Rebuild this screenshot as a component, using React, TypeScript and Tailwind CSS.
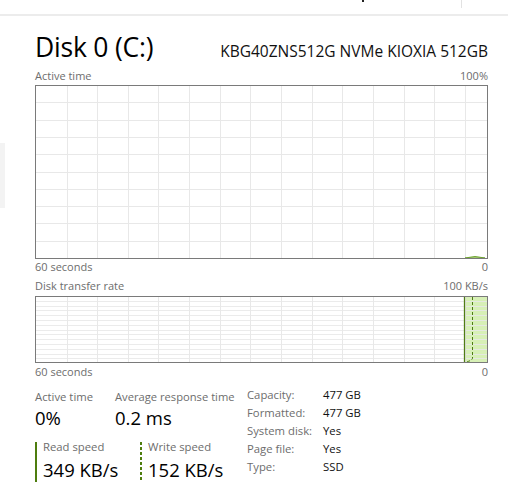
import React from 'react';

const GREEN = '#4f7d14';
const FILL = '#d7f0b6';
const GRID = '#e8e8e8';
const BORDER = '#7a7a7a';

const vLines = Array.from({ length: 14 }, (_, i) => Math.round(31.5 + 30.65 * i) + 0.5);

function ActiveChart() {
    const rows = Array.from({ length: 9 }, (_, k) => Math.round(17.3 * (k + 1)) + 0.5);
    return (
        <svg width={453} height={174} className="block">
            <rect x={0} y={0} width={453} height={174} fill="#ffffff" />
            {rows.map((y) => (
                <line key={y} x1={1} x2={452} y1={y} y2={y} stroke={GRID} />
            ))}
            {vLines.map((x) => (
                <line key={x} x1={x} x2={x} y1={1} y2={173} stroke={GRID} />
            ))}
            <path d="M430 173 Q 440 170 450 173 Z" fill={FILL} stroke="#6fa332" strokeWidth={1} />
            <rect x={0.5} y={0.5} width={452} height={173} fill="none" stroke={BORDER} />
        </svg>
    );
}

function TransferChart() {
    const rows = Array.from({ length: 13 }, (_, k) => Math.round(4.8 * (k + 1)) + 0.5);
    return (
        <svg width={453} height={67} className="block">
            <rect x={0} y={0} width={453} height={67} fill="#ffffff" />
            <rect x={429} y={1} width={23} height={65} fill={FILL} />
            {rows.map((y) => (
                <line key={y} x1={1} x2={452} y1={y} y2={y} stroke={GRID} strokeOpacity={0.85} />
            ))}
            {vLines.map((x) => (
                <line key={x} x1={x} x2={x} y1={1} y2={66} stroke={GRID} />
            ))}
            <line x1={429.5} x2={429.5} y1={1} y2={66} stroke={GREEN} strokeWidth={1.3} />
            <path d="M437.5 1 V 62 Q 437.5 64.5 431 66" fill="none" stroke={GREEN} strokeWidth={1} strokeDasharray="3 2" />
            <rect x={0.5} y={0.5} width={452} height={66} fill="none" stroke={BORDER} />
        </svg>
    );
}

function ChartLabels({ left, right }: { left: string; right: string }) {
    return (
        <div className="flex justify-between h-[14px] leading-[14px] text-[11px] text-[#6d6d6d]">
            <span>{left}</span>
            <span>{right}</span>
        </div>
    );
}

const info = [
    ['Capacity:', '477 GB'],
    ['Formatted:', '477 GB'],
    ['System disk:', 'Yes'],
    ['Page file:', 'Yes'],
    ['Type:', 'SSD'],
];

export default function App() {
    return (
        <div className="w-[508px] h-[494px] bg-white overflow-hidden font-['Open_Sans',sans-serif] text-black">
            {/* clipped header strip */}
            <div className="flex items-start h-[16px] border-b-2 border-[#ececec]">
                <div className="ml-[362px] w-[2px] h-[2px] bg-[#222]" />
                <div className="ml-[97px] w-px h-[8px] bg-[#e2e2e2]" />
            </div>

            <div className="flex">
                <div className="w-[35px] shrink-0">
                    <div className="mt-[127px] w-[5px] h-[65px] bg-[#f3f3f3]" />
                </div>

                <div className="w-[453px] flex flex-col">
                    <div className="mt-[14px] flex justify-between items-baseline h-[34px] leading-[34px]">
                        <span className="text-[26.5px] tracking-[-0.2px]">Disk 0 (C:)</span>
                        <span className="text-[15.5px] text-[#111]">KBG40ZNS512G NVMe KIOXIA 512GB</span>
                    </div>

                    <div className="mt-[5px]">
                        <ChartLabels left="Active time" right="100%" />
                    </div>
                    <div className="mt-[2px]">
                        <ActiveChart />
                    </div>
                    <div className="mt-px">
                        <ChartLabels left="60 seconds" right="0" />
                    </div>

                    <div className="mt-[5px]">
                        <ChartLabels left="Disk transfer rate" right="100 KB/s" />
                    </div>
                    <div className="mt-[3px]">
                        <TransferChart />
                    </div>
                    <div className="mt-[2px]">
                        <ChartLabels left="60 seconds" right="0" />
                    </div>

                    <div className="flex">
                        <div className="w-[212px] shrink-0 flex flex-col">
                            <div className="mt-[10px] flex">
                                <div className="w-[80px]">
                                    <div className="text-[11.3px] leading-[15px] text-[#6d6d6d]">Active time</div>
                                    <div className="mt-[2px] text-[18.5px] leading-[24px]">0%</div>
                                </div>
                                <div>
                                    <div className="text-[11.2px] leading-[15px] text-[#6d6d6d]">Average response time</div>
                                    <div className="mt-[2px] text-[18.5px] leading-[24px]">0.2 ms</div>
                                </div>
                            </div>

                            <div className="mt-[12px] flex">
                                <div className="w-[105px] flex">
                                    <div className="w-[2px] h-[40px] bg-[#4e7d0e]" />
                                    <div className="pl-[6px]">
                                        <div className="text-[11.3px] leading-[10px] text-[#6d6d6d]">Read speed</div>
                                        <div className="mt-[6px] text-[18.5px] leading-[24px]">349 KB/s</div>
                                    </div>
                                </div>
                                <div className="flex">
                                    <div className="w-[2px] h-[40px] bg-[repeating-linear-gradient(to_bottom,#4e7d0e_0_3px,transparent_3px_5px)]" />
                                    <div className="pl-[6px]">
                                        <div className="text-[11.3px] leading-[10px] text-[#6d6d6d]">Write speed</div>
                                        <div className="mt-[6px] text-[18.5px] leading-[24px]">152 KB/s</div>
                                    </div>
                                </div>
                            </div>
                        </div>

                        <div className="mt-[7px] flex flex-col text-[11.3px] leading-[18px]">
                            {info.map(([k, v]) => (
                                <div key={k} className="flex">
                                    <span className="w-[76px] text-[#6d6d6d]">{k}</span>
                                    <span className="text-[#111]">{v}</span>
                                </div>
                            ))}
                        </div>
                    </div>
                </div>
            </div>
        </div>
    );
}
